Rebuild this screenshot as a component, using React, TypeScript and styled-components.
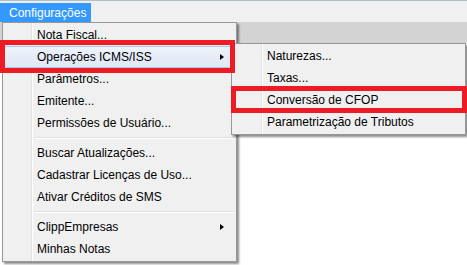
import React from "react";
import styled, { createGlobalStyle } from "styled-components";

const Global = createGlobalStyle`
  html, body { margin: 0; padding: 0; background: #ffffff; }
  body { font-family: "Liberation Sans", Arial, sans-serif; }
`;

const Screen = styled.div`
  position: relative;
  width: 467px;
  height: 265px;
  overflow: hidden;
  background: #ffffff;
  font-family: "Liberation Sans", Arial, sans-serif;
  font-size: 12px;
  color: #000;
`;

const MenuBar = styled.div`
  height: 22px;
  box-sizing: border-box;
  border-top: 1px solid #b4bcc6;
  background: #f0f0f0;
  display: flex;
  align-items: flex-end;
`;

const MenuBarItem = styled.div<{ $open?: boolean }>`
  height: 19px;
  padding: 0 5px 0 9px;
  display: flex;
  align-items: center;
  background: ${(p) => (p.$open ? "#3399ff" : "transparent")};
  color: ${(p) => (p.$open ? "#ffffff" : "#000000")};
`;

const Workspace = styled.div`
  display: flex;
  flex-direction: column;
  height: 243px;
`;

const ToolStrip = styled.div`
  height: 21px;
  background: #d3d3d3;
`;

const Canvas = styled.div`
  flex: 1;
  background: #ffffff;
`;

const Menu = styled.div<{ $left: number; $top: number; $width: number; $gutter: number }>`
  position: absolute;
  left: ${(p) => p.$left}px;
  top: ${(p) => p.$top}px;
  width: ${(p) => p.$width}px;
  box-sizing: border-box;
  border: 1px solid #979797;
  padding: 1px;
  background:
    linear-gradient(
      to right,
      transparent ${(p) => p.$gutter}px,
      #e2e3e3 ${(p) => p.$gutter}px,
      #e2e3e3 ${(p) => p.$gutter + 1}px,
      #ffffff ${(p) => p.$gutter + 1}px,
      #ffffff ${(p) => p.$gutter + 2}px,
      transparent ${(p) => p.$gutter + 2}px
    ),
    #f0f0f0;
  background-origin: padding-box;
  box-shadow: 2px 2px 2px rgba(0, 0, 0, 0.45);
  display: flex;
  flex-direction: column;
`;

const Item = styled.div<{ $indent: number; $hot?: boolean }>`
  position: relative;
  height: 22px;
  box-sizing: border-box;
  display: flex;
  align-items: center;
  padding-left: ${(p) => p.$indent}px;
  padding-right: 10px;
  white-space: nowrap;
  border: 1px solid ${(p) => (p.$hot ? "#a8c8ee" : "transparent")};
  border-radius: 3px;
  background: ${(p) =>
    p.$hot ? "linear-gradient(#eef3fb, #dfe8f5)" : "transparent"};
`;

const Label = styled.span`
  flex: 1;
  line-height: 14px;
`;

const Arrow = styled.span`
  width: 0;
  height: 0;
  margin-top: -1px;
  border-top: 3.5px solid transparent;
  border-bottom: 3.5px solid transparent;
  border-left: 4px solid #000;
`;

const Separator = styled.div<{ $indent: number }>`
  height: 8px;
  display: flex;
  align-items: center;
  padding-left: ${(p) => p.$indent}px;
  &::after {
    content: "";
    flex: 1;
    border-top: 1px solid #e0e0e0;
    border-bottom: 1px solid #ffffff;
  }
`;

const Callout = styled.div<{ $left: number; $top: number; $width: number; $height: number }>`
  position: absolute;
  left: ${(p) => p.$left}px;
  top: ${(p) => p.$top}px;
  width: ${(p) => p.$width}px;
  height: ${(p) => p.$height}px;
  box-sizing: border-box;
  border: 5px solid #ed1c24;
  pointer-events: none;
`;

type Entry =
  | { kind: "item"; label: string; sub?: boolean; hot?: boolean }
  | { kind: "sep" };

const mainEntries: Entry[] = [
  { kind: "item", label: "Nota Fiscal..." },
  { kind: "item", label: "Operações ICMS/ISS", sub: true, hot: true },
  { kind: "item", label: "Parâmetros..." },
  { kind: "item", label: "Emitente..." },
  { kind: "item", label: "Permissões de Usuário..." },
  { kind: "sep" },
  { kind: "item", label: "Buscar Atualizações..." },
  { kind: "item", label: "Cadastrar Licenças de Uso..." },
  { kind: "item", label: "Ativar Créditos de SMS" },
  { kind: "sep" },
  { kind: "item", label: "ClippEmpresas", sub: true },
  { kind: "item", label: "Minhas Notas" },
];

const subEntries: Entry[] = [
  { kind: "item", label: "Naturezas..." },
  { kind: "item", label: "Taxas..." },
  { kind: "item", label: "Conversão de CFOP" },
  { kind: "item", label: "Parametrização de Tributos" },
];

function MenuList({
  entries,
  left,
  top,
  width,
  gutter,
}: {
  entries: Entry[];
  left: number;
  top: number;
  width: number;
  gutter: number;
}) {
  return (
    <Menu $left={left} $top={top} $width={width} $gutter={gutter}>
      {entries.map((e, i) =>
        e.kind === "sep" ? (
          <Separator key={i} $indent={gutter + 2} />
        ) : (
          <Item key={i} $indent={gutter + 4} $hot={e.hot}>
            <Label>{e.label}</Label>
            {e.sub && <Arrow />}
          </Item>
        )
      )}
    </Menu>
  );
}

export default function App() {
  return (
    <>
      <Global />
      <Screen>
        <MenuBar>
          <MenuBarItem $open>Configurações</MenuBarItem>
        </MenuBar>
        <Workspace>
          <ToolStrip />
          <Canvas />
        </Workspace>
        <MenuList entries={mainEntries} left={2} top={22} width={235} gutter={28} />
        <MenuList entries={subEntries} left={231} top={43} width={235} gutter={29} />
        <Callout $left={0} $top={40} $width={235} $height={33} />
        <Callout $left={231} $top={86} $width={236} $height={27} />
      </Screen>
    </>
  );
}
